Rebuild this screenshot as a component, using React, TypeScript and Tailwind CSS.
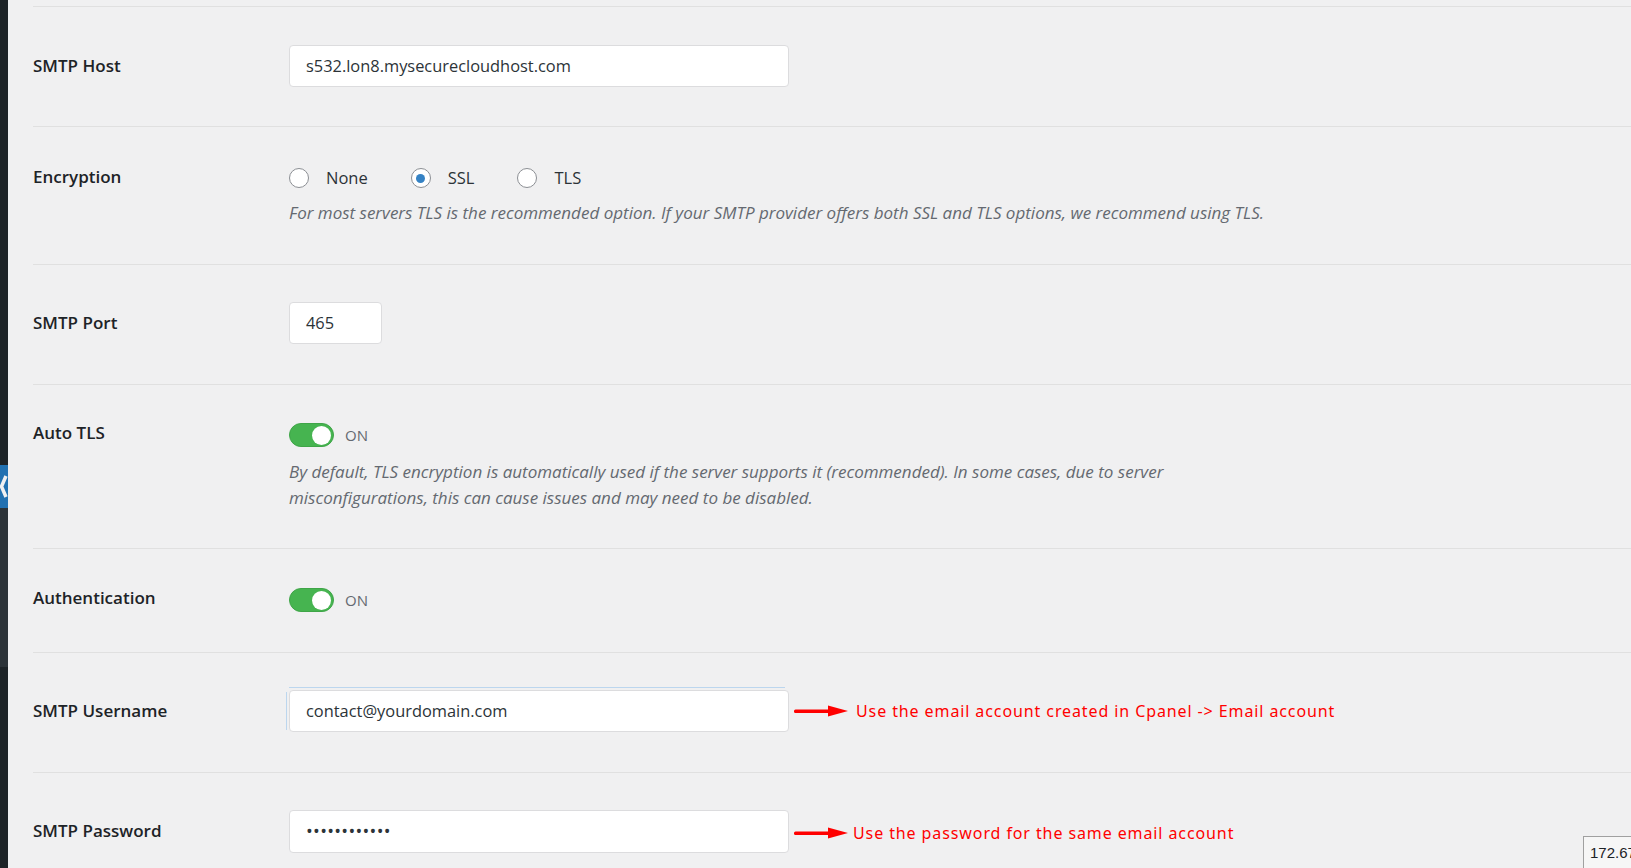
import React from "react";

const font = { fontFamily: "'Open Sans', 'Noto Sans', sans-serif" };

const Arrow = () => (
    <svg width="54" height="14" viewBox="0 0 54 14" className="shrink-0">
        <rect x="0" y="5.5" width="38" height="3.5" rx="1.5" fill="#ff0000" />
        <polygon points="34,1.5 54,7 34,12.5" fill="#ff0000" />
    </svg>
);

const Note = ({ text, gap = "gap-[8px]" }: { text: string; gap?: string }) => (
    <div className={`flex items-center ml-[5px] ${gap}`}>
        <Arrow />
        <span className="text-[16px] text-[#ff0000] tracking-[0.9px] whitespace-nowrap" style={{ fontFamily: "'Noto Sans', sans-serif" }}>
            {text}
        </span>
    </div>
);

const TextBox = ({ value, w = "w-[500px]" }: { value: string; w?: string }) => (
    <div className={`${w} h-[42px] bg-white border border-[#dcdcde] rounded-[4px] px-[16px] flex items-center text-[16.4px] text-[#2c3338]`}>
        {value}
    </div>
);

const Toggle = () => (
    <div className="flex items-center h-[24px] gap-[11px]">
        <div className="w-[45px] h-[24px] rounded-full bg-[#46b450] border border-[#3fa548] flex items-center justify-end pr-[2px]">
            <div className="w-[19px] h-[19px] rounded-full bg-white" />
        </div>
        <span className="text-[15px] text-[#646970]">ON</span>
    </div>
);

const Radio = ({ label, checked }: { label: string; checked?: boolean }) => (
    <div className="flex items-center gap-[17px]">
        <span className="w-[20px] h-[20px] rounded-full bg-white border border-[#8c8f94] flex items-center justify-center">
            {checked && <span className="w-[9px] h-[9px] rounded-full bg-[#3582c4]" />}
        </span>
        <span className="text-[16.5px] text-[#2c3338]">{label}</span>
    </div>
);

const Label = ({ text, pt }: { text: string; pt: string }) => (
    <div className={`w-[256px] shrink-0 ${pt} text-[17px] leading-6 font-semibold text-[#1d2327]`}>{text}</div>
);

export default function App() {
    return (
        <div className="w-full h-[868px] overflow-hidden bg-[#f0f0f1] flex relative" style={font}>
            <div className="w-[8px] shrink-0 flex flex-col">
                <div className="h-[465px] bg-[#1d2327]" />
                <div className="h-[43px] bg-[#2271b1]">
                    <svg width="8" height="43" viewBox="0 0 8 43">
                        <polyline points="6,11 1.5,21.5 6,32" fill="none" stroke="#f0f0f1" strokeWidth="3.5" />
                    </svg>
                </div>
                <div className="h-[159px] bg-[#2c3338]" />
                <div className="flex-1 bg-[#1d2327]" />
            </div>

            <div className="flex-1 pl-[25px] pt-[6px]">
                <div className="flex h-[120px] border-t border-[#e0e0e0]">
                    <Label text="SMTP Host" pt="pt-[47px]" />
                    <div className="pt-[38px]">
                        <TextBox value="s532.lon8.mysecurecloudhost.com" />
                    </div>
                </div>

                <div className="flex h-[138px] border-t border-[#e0e0e0]">
                    <Label text="Encryption" pt="pt-[38px]" />
                    <div className="pt-[39px]">
                        <div className="flex items-center h-[24px] gap-[43px]">
                            <Radio label="None" />
                            <Radio label="SSL" checked />
                            <Radio label="TLS" />
                        </div>
                        <p className="mt-[11px] text-[17px] leading-6 italic text-[#646970]">
                            For most servers TLS is the recommended option. If your SMTP provider offers both SSL and TLS options, we recommend using TLS.
                        </p>
                    </div>
                </div>

                <div className="flex h-[120px] border-t border-[#e0e0e0]">
                    <Label text="SMTP Port" pt="pt-[46px]" />
                    <div className="pt-[37px]">
                        <TextBox value="465" w="w-[93px]" />
                    </div>
                </div>

                <div className="flex h-[164px] border-t border-[#e0e0e0]">
                    <Label text="Auto TLS" pt="pt-[36px]" />
                    <div className="pt-[38px]">
                        <Toggle />
                        <p className="mt-[12px] w-[900px] text-[17px] leading-[26px] italic text-[#646970]">
                            By default, TLS encryption is automatically used if the server supports it (recommended). In some cases, due to server misconfigurations, this can cause issues and may need to be disabled.
                        </p>
                    </div>
                </div>

                <div className="flex h-[104px] border-t border-[#e0e0e0]">
                    <Label text="Authentication" pt="pt-[37px]" />
                    <div className="pt-[39px]">
                        <Toggle />
                    </div>
                </div>

                <div className="flex h-[120px] border-t border-[#e0e0e0]">
                    <Label text="SMTP Username" pt="pt-[46px]" />
                    <div className="pt-[37px] flex items-start">
                        <div className="relative">
                            <span className="absolute -top-[3px] left-0 right-[4px] h-px bg-[#bcd6ee]" />
                            <span className="absolute -left-[3px] top-[2px] bottom-[2px] w-px bg-[#bcd6ee]" />
                            <TextBox value="contact@yourdomain.com" />
                        </div>
                        <div className="h-[42px] flex items-center">
                            <Note text="Use the email account created in Cpanel -> Email account" />
                        </div>
                    </div>
                </div>

                <div className="flex h-[96px] border-t border-[#e0e0e0]">
                    <Label text="SMTP Password" pt="pt-[46px]" />
                    <div className="pt-[37px] flex items-start">
                        <div className="w-[500px] h-[43px] bg-white border border-[#dcdcde] rounded-[4px] px-[16px] flex items-center text-[18px] tracking-[0.3px] text-[#2c3338]">
                            ••••••••••••
                        </div>
                        <div className="h-[46px] flex items-center">
                            <Note text="Use the password for the same email account" gap="gap-[5px]" />
                        </div>
                    </div>
                </div>
            </div>

            <div className="absolute left-[1583px] top-[836px] w-[80px] h-[40px] bg-[#f6f6f6] border border-[#a0a0a0] pl-[6px] pt-[5px] text-[15px] text-[#1d2327]" style={{ fontFamily: "'Liberation Sans', sans-serif" }}>
                172.67
            </div>
        </div>
    );
}
